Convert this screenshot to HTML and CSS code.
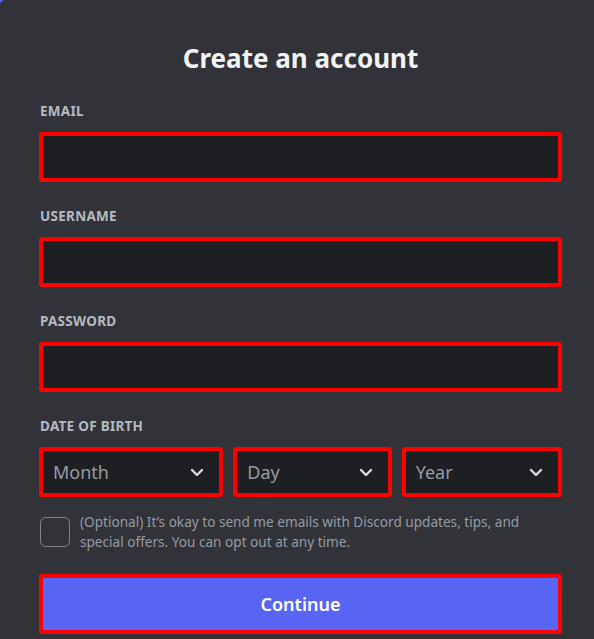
FILE: index.html
```html
<html>
<head>
    <title>Discord | Register</title>
    <link rel="stylesheet" href="styles.css">
</head>
<body>
    <div class="card">
        <form id="register-form">
            <h1 class="title">Create an account</h1>

            <div class="field">
                <label for="email">Email</label>
                <input type="email" id="email" name="email">
            </div>

            <div class="field">
                <label for="username">Username</label>
                <input type="text" id="username" name="username">
            </div>

            <div class="field">
                <label for="password">Password</label>
                <input type="password" id="password" name="password">
            </div>

            <div class="field">
                <label>Date of Birth</label>
                <div class="dob">
                    <div class="select">
                        <span>Month</span>
                        <svg width="16" height="16" viewBox="0 0 16 16"><path d="M3 6l5 5 5-5" fill="none" stroke="currentColor" stroke-width="2.4" stroke-linecap="round" stroke-linejoin="round"/></svg>
                    </div>
                    <div class="select">
                        <span>Day</span>
                        <svg width="16" height="16" viewBox="0 0 16 16"><path d="M3 6l5 5 5-5" fill="none" stroke="currentColor" stroke-width="2.4" stroke-linecap="round" stroke-linejoin="round"/></svg>
                    </div>
                    <div class="select">
                        <span>Year</span>
                        <svg width="16" height="16" viewBox="0 0 16 16"><path d="M3 6l5 5 5-5" fill="none" stroke="currentColor" stroke-width="2.4" stroke-linecap="round" stroke-linejoin="round"/></svg>
                    </div>
                </div>
            </div>

            <div class="optin">
                <input type="checkbox" id="optin" name="optin">
                <label for="optin">(Optional) It’s okay to send me emails with Discord updates, tips, and special offers. You can opt out at any time.</label>
            </div>

            <button type="submit" class="continue">Continue</button>
        </form>
    </div>
</body>
</html>
```

FILE: styles.css
```css
*{
    margin: 0;
    box-sizing: border-box;
}
body{
    background-color: #5865f2;
    font-family: 'Noto Sans', sans-serif;
}
.card{
    min-height: 100vh;
    background-color: #313338;
    border-top-left-radius: 5px;
    padding: 42px 32px 0 39px;
}
.title{
    color: #f2f3f5;
    font-size: 26px;
    line-height: 32px;
    font-weight: 700;
    text-align: center;
    margin-bottom: 29px;
}
.field{
    margin-bottom: 26px;
}
.field label{
    display: block;
    color: #b5bac1;
    font-size: 13.5px;
    line-height: 16px;
    font-weight: 700;
    text-transform: uppercase;
    letter-spacing: 0.02em;
    margin-left: 1px;
    margin-bottom: 13px;
}
.field input{
    display: block;
    width: 100%;
    height: 50px;
    background-color: #1e1f22;
    border: 4px solid #ff0000;
    border-radius: 3px;
    outline: none;
}
.dob{
    display: grid;
    grid-template-columns: 184fr 158fr 160fr;
    gap: 10px;
}
.select{
    height: 50px;
    background-color: #1e1f22;
    border: 4px solid #ff0000;
    border-radius: 3px;
    display: flex;
    align-items: center;
    justify-content: space-between;
    padding: 0 14px 0 10px;
    color: #dbdee1;
}
.select span{
    color: #949ba4;
    font-size: 18px;
}
.optin{
    display: flex;
    gap: 10px;
    margin-top: -11px;
    margin-bottom: 22px;
}
.optin input{
    appearance: none;
    flex: none;
    width: 30px;
    height: 30px;
    margin: 5px 0 0 1px;
    border: 1px solid #80848e;
    border-radius: 6px;
}
.optin label{
    color: #949ba4;
    font-size: 13.6px;
    line-height: 20px;
}
.continue{
    display: block;
    width: 100%;
    height: 60px;
    background-color: #5865f2;
    border: 4px solid #ff0000;
    border-radius: 3px;
    color: #ffffff;
    font-family: 'Noto Sans', sans-serif;
    font-size: 18px;
    font-weight: 600;
}
```
